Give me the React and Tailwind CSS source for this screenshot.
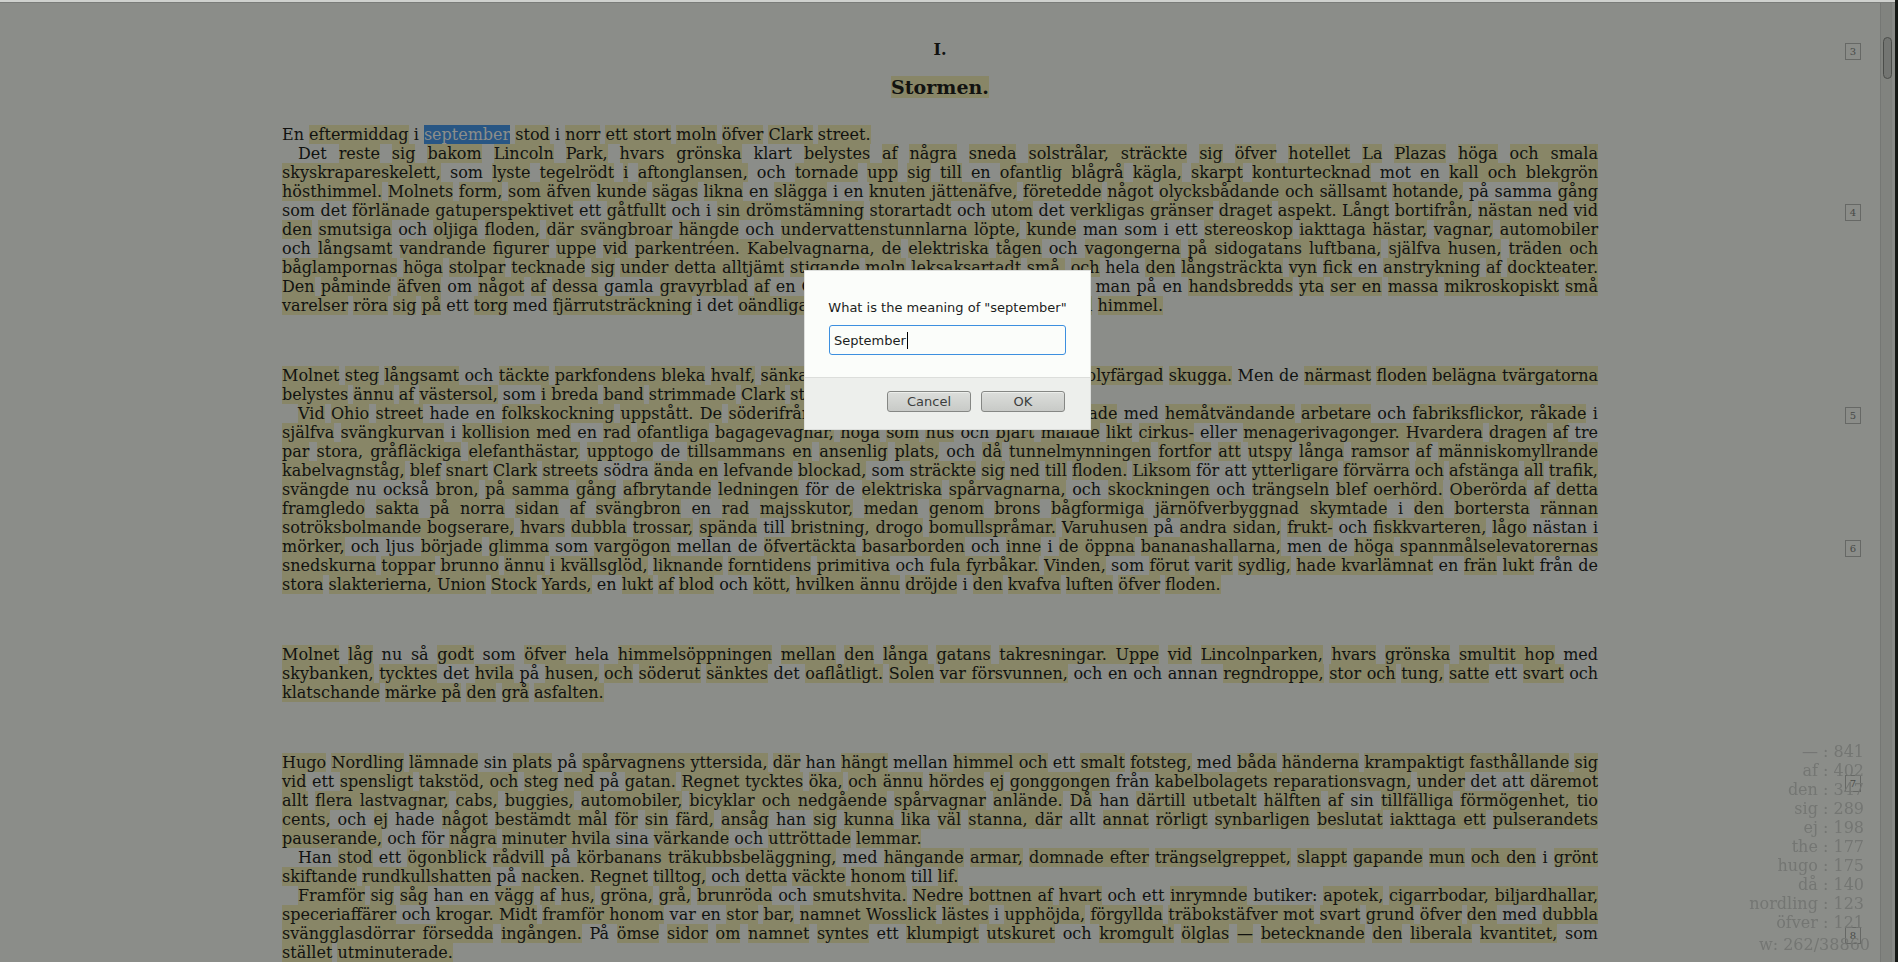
import React from "react";

// In the passages below, {braces} hold highlighted runs, [brackets] hold the
// selected word and #n places the badge of page n in the right margin.
const SECTIONS = [
  [
    "En {eftermiddag} i [september] {stod} i {norr} {ett stort} {moln} {öfver} {Clark} {street.}",
    "Det {reste} {sig} {bakom} {Lincoln} {Park,} {hvars grönska} klart {belystes} {af} {några} {sneda} {solstrålar, sträckte} {sig} {öfver} {hotellet} {La} {Plazas} {höga} {och smala} {skyskrapareskelett,} som {lyste} {tegelrödt} {i} {aftonglansen,} och {tornade} {upp} {sig} {till} en {ofantlig blågrå} {kägla,} {skarpt} {konturtecknad} mot en {kall och blekgrön} {hösthimmel.} {Molnets} {form,} {som äfven} {kunde} {sägas} {likna} en {slägga} i en {knuten jättenäfve,} {företedde} {något} {olycksbådande och sällsamt} {hotande,} på samma {gång} som det {förlänade gatuperspektivet} ett {gåtfullt} och i {sin drömstämning} {storartadt} och {utom} det {verkligas gränser} {draget} {aspekt. Långt} #4{bortifrån,} {nästan ned} {vid} {den} {smutsiga} och {oljiga} {floden,} {där svängbroar} {hängde} och {undervattenstunnlarna löpte,} {kunde} man som i ett {stereoskop} {iakttaga hästar,} {vagnar,} {automobiler} och {långsamt} {vandrande figurer} {uppe} {vid} {parkentréen. Kabelvagnarna, de} {elektriska} {tågen} och {vagongerna} {på sidogatans luftbana,} {själfva husen,} {träden och} {båglampornas} {höga} {stolpar} {tecknade} {sig} {under detta alltjämt} {stigande} {moln} {leksaksartadt} {små,} {och} hela {den} {långsträckta} {vyn} {fick} en {anstrykning} {af} {dockteater.} {Den} {påminde} {äfven} om {något} {af} {dessa} gamla {gravyrblad} {af} en Canaletto {eller en Callot, på} hvilka man på en {handsbredds} {yta} {ser en} {massa} {mikroskopiskt} {små} {varelser} {röra} {sig} {på} ett {torg} med {fjärrutsträckning} i det {oändliga} {under en omätligt hög, och vidgad} {himmel.}",
  ],
  [
    "{Molnet} {steg} {långsamt} och {täckte} {parkfondens bleka} {hvalf,} {sänkande} {stranden} {bortom floden i en polyfärgad} {skugga.} Men de {närmast} {floden} {belägna tvärgatorna} {belystes} {ännu} {af} {västersol,} som {i breda} {band} {strimmade} {Clark} {street.}",
    "{Vid} {Ohio} {street} hade en {folkskockning} {uppstått. De} {söderifrån} {inkommande vagnarna, öfverlastade} #5med {hemåtvändande} {arbetare} och {fabriksflickor, råkade} i {själfva} {svängkurvan} i {kollision med} en {rad} {ofantliga} {bagagevagnar,} {höga} {som} {hus} och {bjärt} {målade} {likt} {cirkus-} eller {menagerivagonger. Hvardera} {dragen} {af} tre {par} {stora, gråfläckiga} {elefanthästar,} {upptogo} de {tillsammans en} {ansenlig} {plats,} och {då} {tunnelmynningen} {fortfor} {att} {utspy} {långa} {ramsor} {af} {människomyllrande} {kabelvagnståg,} {blef} {snart} {Clark} {streets} södra {ända en} {lefvande} {blockad,} som {sträckte} {sig} {ned} {till} {floden.} {Liksom} för att {ytterligare} {förvärra} {och} {afstänga} {all} {trafik,} {svängde} nu också {bron,} {på samma} {gång} {afbrytande} {ledningen} för de {elektriska} {spårvagnarna,} och {skockningen} och {trängseln} {blef oerhörd.} {Oberörda} {af} {detta} {framgledo} {sakta} {på norra} {sidan} {af} {svängbron} en {rad} {majsskutor,} {medan} {genom} {brons} {bågformiga} {järnöfverbyggnad skymtade} i {den} {bortersta} {rännan} {sotröksbolmande bogserare,} {hvars} {dubbla} {trossar,} {spända} till {bristning, drogo} {bomullspråmar.} {Varuhusen} på {andra sidan,} {frukt-} och {fiskkvarteren,} {lågo} nästan i {mörker,} och ljus {började} {glimma} som {vargögon} mellan de {öfvertäckta} {basarborden} #6och {inne} i {de öppna} {bananashallarna,} men de {höga} {spannmålselevatorernas} {snedskurna} {toppar} {brunno} {ännu} {i kvällsglöd,} {liknande} {forntidens} {primitiva} och {fula fyrbåkar.} {Vinden,} som {förut} {varit} {sydlig,} {hade kvarlämnat} en {frän} {lukt} från de {stora} {slakterierna, Union} {Stock} {Yards,} en {lukt} {af} {blod} och {kött,} {hvilken ännu} {dröjde} i {den} {kvafva} {luften} {öfver} {floden.}",
  ],
  [
    "{Molnet} {låg} nu så {godt} som {öfver} hela {himmelsöppningen} {mellan} {den} {långa} {gatans} {takresningar. Uppe} {vid} {Lincolnparken,} {hvars} {grönska} {smultit hop} med {skybanken,} {tycktes} det {hvila} på {husen,} {och} {söderut} {sänktes} det {oaflåtligt.} {Solen} {var försvunnen,} och en och annan {regndroppe,} {stor och} {tung,} {satte} ett {svart} och {klatschande} {märke på} {den} {grå} {asfalten.}",
  ],
  [
    "{Hugo} {Nordling} {lämnade} sin {plats} på {spårvagnens yttersida,} {där} han {hängt} mellan {himmel och} ett {smalt} {fotsteg,} med {båda} {händerna} {krampaktigt fasthållande} {sig} {vid} ett {spensligt} {takstöd, och} {steg} {ned} på {gatan.} {Regnet tycktes} {öka,} {och ännu} {hördes} {ej} {gonggongen} #7från {kabelbolagets reparationsvagn,} {under} det att {däremot} {allt} {flera lastvagnar,} {cabs,} {buggies,} {automobiler,} {bicyklar och nedgående} {spårvagnar} {anlände.} {Då} han {därtill utbetalt} {hälften} {af} sin {tillfälliga} {förmögenhet, tio} {cents,} och {ej} hade {något} {bestämdt mål} {för} {sin} {färd,} {ansåg} han {sig} {kunna} {lika} {väl} {stanna, där} allt {annat} {rörligt} {synbarligen} {beslutat} {iakttaga ett} {pulserandets} {pauserande,} och för {några} {minuter hvila} sina {värkande} och {uttröttade} {lemmar.}",
    "Han {stod} ett {ögonblick} {rådvill} på {körbanans träkubbsbeläggning,} med {hängande} {armar,} {domnade efter} {trängselgreppet,} {slappt} {gapande} {mun} {och den} i {grönt} {skiftande} {rundkullshatten} på {nacken. Regnet} {tilltog,} och {detta} {väckte} {honom} till {lif.}",
    "{Framför} {sig} {såg} han en {vägg} {af} {hus,} {gröna,} {grå,} {brunröda} och {smutshvita.} {Nedre} {bottnen af} {hvart} och ett {inrymnde} butiker: {apotek,} {cigarrbodar, biljardhallar,} {speceriaffärer} och {krogar. Midt} {framför honom} var en {stor} {bar,} {namnet Wosslick} {lästes} i {upphöjda,} {förgyllda} {träbokstäfver mot} {svart} {grund} {öfver} {den} med {dubbla} {svängglasdörrar försedda} {ingången.} På {ömse} {sidor} {om} {namnet} {syntes} ett {klumpigt} {utskuret} #8och {kromgult} {ölglas} {—} {betecknande} {den} {liberala} {kvantitet,} som {stället} {utminuterade.}",
  ],
];

const COUNTS = [
  ["—", 841],
  ["af", 402],
  ["den", 347],
  ["sig", 289],
  ["ej", 198],
  ["the", 177],
  ["hugo", 175],
  ["då", 140],
  ["nordling", 123],
  ["öfver", 121],
];

function PageBadge({ number }) {
  return (
    <span className="absolute right-[19px] mt-[3px] inline-flex h-[17px] w-4 items-center justify-center border border-[#666865] indent-0 text-[10px] leading-none font-normal text-[#484a47]">
      {number}
    </span>
  );
}

function Passage({ text }) {
  return text.split(/(\{[^}]*\}|\[[^\]]*\]|#\d)/).map((part, i) => {
    if (part.startsWith("{"))
      return (
        <mark key={i} className="bg-[#888667] text-inherit">
          {part.slice(1, -1)}
        </mark>
      );
    if (part.startsWith("["))
      return (
        <span key={i} className="bg-[#285684] text-[#8c8e8b]">
          {part.slice(1, -1)}
        </span>
      );
    if (part.startsWith("#")) return <PageBadge key={i} number={part.slice(1)} />;
    return part;
  });
}

function Chapter() {
  return (
    <main className="relative min-w-0 flex-1">
      <div className="px-[15%] pt-[37px]">
        <h2 className="text-center font-bold">
          <PageBadge number="3" />
          I.
        </h2>
        <h1 className="mt-[17px] mb-[26px] text-center text-[19px] leading-[23px] font-bold">
          <mark className="bg-[#888667] text-inherit">Stormen.</mark>
        </h1>
        <div className="flex flex-col gap-[51px]">
          {SECTIONS.map((section, i) => (
            <section key={i} className="text-justify">
              {section.map((text, j) => (
                <p key={j} className={j > 0 ? "indent-4" : ""}>
                  <Passage text={text} />
                </p>
              ))}
            </section>
          ))}
        </div>
      </div>
    </main>
  );
}

function Scrollbar() {
  return (
    <div className="flex w-[15px] shrink-0 border-l border-[#757774] bg-[#888a87]">
      <div className="relative w-[11px] border-r border-[#7f817e] bg-[#81837f]">
        <div className="absolute top-[34px] left-[2px] h-[42px] w-[9px] rounded-full border border-[#4b4d4a] bg-[#737572]" />
      </div>
    </div>
  );
}

function WordCounts() {
  return (
    <aside className="fixed right-7 bottom-2 text-right text-[#747673]">
      <ul className="pr-[6px]">
        {COUNTS.map(([word, count]) => (
          <li key={word}>
            {word} : {count}
          </li>
        ))}
      </ul>
      <p className="mt-[3px]">w: 262/38860</p>
    </aside>
  );
}

const buttonClass =
  "h-[21px] w-[84px] rounded-[3px] border border-[#858784] bg-linear-to-b from-[#dcdedb] to-[#c8cac7] text-[#3c3e3d] shadow-[inset_0_1px_0_#eceeeb]";

function PromptDialog() {
  return (
    <div className="fixed inset-0 flex items-start justify-center pt-[270px] pr-[3px]">
      <form
        role="dialog"
        aria-labelledby="prompt-label"
        className="w-[287px] border border-[#dcdedb] bg-[#fbfdfa] font-['DejaVu_Sans',sans-serif] text-[13px] leading-[17px] text-[#1c1e1d]"
        onSubmit={(e) => e.preventDefault()}
      >
        <div className="px-5 pt-7 pb-[22px]">
          <label id="prompt-label" htmlFor="meaning" className="block text-center whitespace-nowrap">
            What is the meaning of "september"
          </label>
          <div className="relative mx-1 mt-[9px]">
            <input
              id="meaning"
              type="text"
              defaultValue="September"
              className="block h-[30px] w-full rounded-[3px] border border-[#3c8fdf] bg-[#fbfdfa] px-1 outline-none"
            />
            <span className="absolute top-[7px] left-[78px] h-[17px] w-px bg-black" />
          </div>
        </div>
        <div className="flex justify-end gap-[10px] border-t border-[#dcdedb] bg-[#edefec] pt-[13px] pr-[25px] pb-[17px]">
          <button type="button" className={buttonClass}>
            Cancel
          </button>
          <button type="submit" className={buttonClass}>
            OK
          </button>
        </div>
      </form>
    </div>
  );
}

export default function App() {
  return (
    <div className="flex h-screen flex-col overflow-hidden bg-[#151815] pr-[3px] font-['DejaVu_Serif',serif] text-[16px] leading-[19px] text-[#111210]">
      <div className="h-[3px] shrink-0 border-b border-[#7a7c79] bg-[#cfd1ce]" />
      <div className="flex min-h-0 flex-1 overflow-hidden bg-[#8b8d89]">
        <Chapter />
        <Scrollbar />
      </div>
      <WordCounts />
      <PromptDialog />
    </div>
  );
}
